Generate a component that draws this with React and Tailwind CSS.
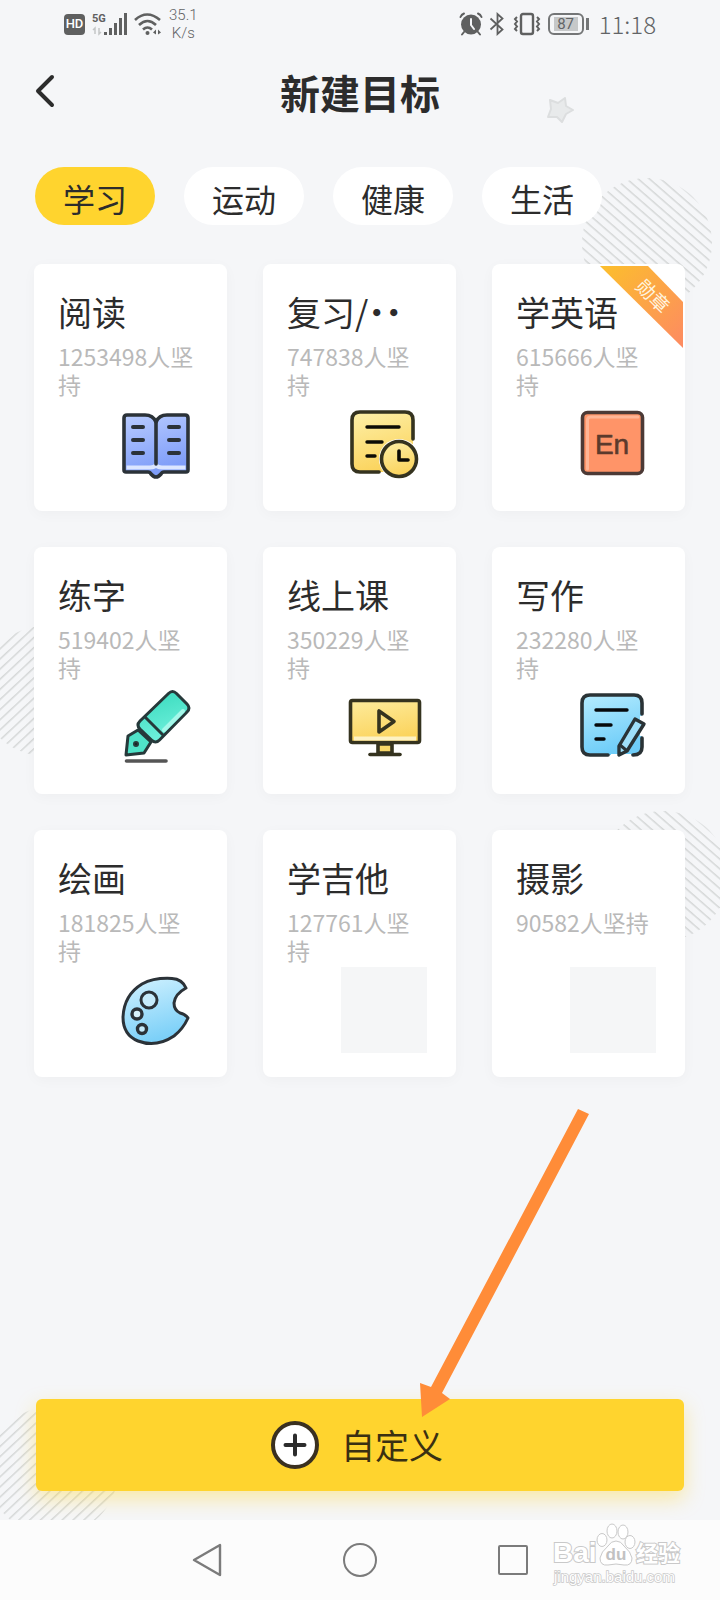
import { useState } from 'react'
import clsx from 'clsx'

const tabs = ['学习', '运动', '健康', '生活']

const goals = [
  { name: '阅读', count: 1253498, icon: BookIcon },
  { name: '复习/··', count: 747838, icon: ReviewIcon },
  { name: '学英语', count: 615666, icon: EnglishIcon, medal: true },
  { name: '练字', count: 519402, icon: PenIcon },
  { name: '线上课', count: 350229, icon: MonitorIcon },
  { name: '写作', count: 232280, icon: WritingIcon },
  { name: '绘画', count: 181825, icon: PaletteIcon },
  { name: '学吉他', count: 127761 },
  { name: '摄影', count: 90582 },
]

function Gradient({ id, from, to }) {
  return (
    <linearGradient id={id} x1="0" y1="0" x2="0.3" y2="1">
      <stop offset="0" stopColor={from} />
      <stop offset="1" stopColor={to} />
    </linearGradient>
  )
}

function IconBox({ children, stroke = '#2b3238' }) {
  return (
    <svg viewBox="0 0 86 86" className="size-[86px]" fill="none" stroke={stroke} strokeWidth="3.6" strokeLinecap="round" strokeLinejoin="round" aria-hidden="true">
      {children}
    </svg>
  )
}

function BookIcon() {
  return (
    <IconBox>
      <Gradient id="book" from="#b9ccff" to="#7d9cf8" />
      <path d="M12 17q0-3 3-3h18q8 0 11 7q3-7 11-7h18q3 0 3 3v52q0 2-2 2H52q-2 0-3 2q-5 6-10 0q-1-2-3-2H14q-2 0-2-2z" fill="url(#book)" />
      <path d="M14.500 66.500H38q5 0 6-3q1 3 6 3h23.500" stroke="#dce6ff" strokeWidth="4" strokeLinecap="butt" />
      <path d="M44 21v42" />
      <path d="M21 26h10M21 39h10M21 52h10M57 26h10M57 39h10M57 52h10" strokeWidth="4" />
    </IconBox>
  )
}

function ReviewIcon() {
  return (
    <IconBox stroke="#35331f">
      <Gradient id="review" from="#fdf0a9" to="#fbd45e" />
      <rect x="11" y="11" width="61" height="60" rx="8" fill="url(#review)" stroke="none" />
      <circle cx="58" cy="58" r="20" fill="#fff" stroke="none" />
      <path d="M72 38V19q0-8-8-8H19q-8 0-8 8v44q0 8 8 8h19" />
      <path d="M26 26h32M26 41h15M26 55h8" stroke="#0c0b05" strokeWidth="3.4" />
      <circle cx="58" cy="58" r="17.500" fill="url(#review)" />
      <path d="M58 50v9h9" stroke="#0c0b05" />
    </IconBox>
  )
}

function EnglishIcon() {
  return (
    <IconBox stroke="#4c3a36">
      <rect x="12.500" y="11.500" width="60" height="61" rx="5" fill="#ff9468" />
      <path d="M17.500 68V19q0-3 3-3H68" stroke="#ffb596" strokeWidth="3" />
      <text x="42" y="53" textAnchor="middle" fill="#5c3a2c" stroke="#5c3a2c" strokeWidth="0.6" fontSize="28" fontFamily="'Liberation Sans', sans-serif">En</text>
    </IconBox>
  )
}

function PenIcon() {
  return (
    <IconBox stroke="#26393a">
      <Gradient id="pen" from="#35d9bb" to="#6ff0dc" />
      <path d="M26 46l-10 6l-2 19l18-2l7-11z" fill="#4fe3c8" strokeWidth="3" />
      <path d="M56.500 9.500q4-4 8 0L75 20q4 4 0 8L47.500 56q-4 4-8 0L28 45q-4-4 0-8z" fill="url(#pen)" strokeWidth="3" />
      <path d="M71 27L52 46" stroke="#a5f8ea" strokeWidth="4" />
      <path d="M33 33l18 18" strokeWidth="3" />
      <circle cx="24" cy="60" r="2" fill="#10201f" strokeWidth="2" />
      <path d="M14.500 77H54" stroke="#555" />
    </IconBox>
  )
}

function MonitorIcon() {
  return (
    <IconBox stroke="#35331f">
      <Gradient id="monitor" from="#fdeb9c" to="#fbd45e" />
      <path d="M37 60h14v9H37z" fill="#f8d768" />
      <rect x="9.500" y="16.500" width="69" height="42" rx="2" fill="url(#monitor)" />
      <path d="M13 54.500h62" stroke="#fdf2c4" strokeWidth="4" strokeLinecap="butt" />
      <path d="M38 27v21l15-10.500z" />
      <path d="M29 70.500h30" />
    </IconBox>
  )
}

function WritingIcon() {
  return (
    <IconBox stroke="#2a3336">
      <Gradient id="writing" from="#b5ecff" to="#6fcdf8" />
      <rect x="12" y="11" width="60" height="60" rx="8" fill="url(#writing)" stroke="none" />
      <path d="M70 32h6v20h-6zM41 70h20v6H41z" fill="#fff" stroke="none" />
      <path d="M72 30V19q0-8-8-8H20q-8 0-8 8v44q0 8 8 8h18" />
      <path d="M72 54v9q0 8-9 8" />
      <path d="M26 26h31M26 41h15M26 55h8" stroke="#06090b" strokeWidth="3.4" />
      <path d="M65 35l9 5l-17 27l-8 4v-9z" fill="#9fdff9" strokeWidth="3.400" />
      <path d="M50 61l6 5" strokeWidth="3" />
    </IconBox>
  )
}

function PaletteIcon() {
  return (
    <IconBox>
      <Gradient id="palette" from="#d3f2ff" to="#7cd0f8" />
      <path d="M74 21q-4-9-14-9.500q-18-1-30 5.500q-18 11-19 33q0 18 15 24q18 7 36-5q9-7 14-18q-3-4-8-5q-6-3-6-10q1-9 12-15z" fill="url(#palette)" strokeWidth="3" />
      <circle cx="37" cy="33" r="8" strokeWidth="3" fill="#c5ebfb" />
      <circle cx="25" cy="47" r="5" strokeWidth="3.400" fill="#d8f2fc" />
      <circle cx="30" cy="62" r="4.500" strokeWidth="3.400" fill="#c5ebfb" />
    </IconBox>
  )
}

function MedalRibbon() {
  return (
    <svg viewBox="0 0 83 83" className="absolute top-0.5 right-0.5 size-[83px]">
      <linearGradient id="ribbon" x1="0" y1="0" x2="1" y2="1">
        <stop offset="0" stopColor="#fcbf2c" />
        <stop offset="1" stopColor="#fd8a62" />
      </linearGradient>
      <path d="M0 0h48l35 36v46z" fill="url(#ribbon)" />
      <text x="53" y="37" textAnchor="middle" transform="rotate(45 53 30)" fill="#fff4df" fontSize="19">勋章</text>
    </svg>
  )
}

// striped circle used as background decoration
function Stripes({ id, className, flip }) {
  return (
    <svg viewBox="0 0 130 130" className={clsx('absolute -z-10 size-[130px]', className)} aria-hidden="true">
      <pattern id={id} width="8" height="7.4" patternUnits="userSpaceOnUse" patternTransform={flip ? 'rotate(-43)' : 'rotate(41)'}>
        <rect width="8" height="1.500" fill="#d6d8d8" />
      </pattern>
      <circle cx="65" cy="65" r="65" fill={`url(#${id})`} />
    </svg>
  )
}

function StatusBar() {
  return (
    <div className="flex h-12 items-center justify-between px-16 text-[#626466]">
      <div className="flex items-center">
        <span className="flex size-[21px] items-center justify-center rounded-sm bg-[#5f6060] font-['Roboto',sans-serif] text-[13px] font-medium text-white">HD</span>
        <svg viewBox="0 0 36 24" className="ml-[7px] h-6 w-9" aria-hidden="true">
          <text x="0" y="10" fontSize="11" fontWeight="700" fill="#5f6060" fontFamily="'Liberation Sans Narrow', Roboto, sans-serif">5G</text>
          <path d="M3 22v-6l-2 2M7 16v6l2-2" stroke="#c4c6c6" strokeWidth="1.500" fill="none" />
          <path d="M13.500 20v3M18.500 16v7M23.500 11v12M28.500 6v17M33.500 1v22" stroke="#5f6060" strokeWidth="3" />
        </svg>
        <svg viewBox="0 0 28 24" className="ml-1.5 h-6 w-7" fill="none" stroke="#5f6060" strokeWidth="2.600" aria-hidden="true">
          <path d="M1 8q12-11 25 0M5 13q8.500-8 17 0M9 17.500q4.500-4 9 0" />
          <circle cx="13.500" cy="21" r="2" fill="#5f6060" stroke="none" />
          <path d="M19 20.500l3-3v5zM27 20.500l-3-3v5z" fill="#5f6060" stroke="none" />
        </svg>
        <span className="ml-[7px] text-center font-['Roboto',sans-serif] text-[15px] leading-[18px] font-light">
          35.1<br />K/s
        </span>
      </div>
      <div className="flex items-center">
        <svg viewBox="0 0 24 24" className="size-6" fill="none" stroke="#5f6060" strokeWidth="2" strokeLinecap="round" aria-hidden="true">
          <circle cx="12" cy="12.500" r="10" fill="#5f6060" stroke="none" />
          <path d="M12 7v6l3 4" stroke="#f5f6f8" />
          <path d="M1.500 5q1-2.500 3.500-3.500M22.500 5q-1-2.500-3.500-3.500M5 20l-2 2.500M19 20l2 2.500" />
        </svg>
        <svg viewBox="0 0 16 24" className="ml-1.5 h-6 w-4" fill="none" stroke="#5f6060" strokeWidth="1.800" aria-hidden="true">
          <path d="M1.500 6.500l12 11l-5 4.500V2l5 4.500l-12 11" />
        </svg>
        <svg viewBox="0 0 28 24" className="ml-2 h-6 w-7" fill="none" stroke="#5f6060" strokeWidth="2" aria-hidden="true">
          <rect x="8" y="2" width="12" height="20" rx="2" strokeWidth="2.400" />
          <path d="M4 5L2 7l2 2.500L2 12l2 2.500L2 17l2 2M24 5l2 2l-2 2.500l2 2.500l-2 2.500l2 2.500l-2 2" />
        </svg>
        <span className="ml-[7px] flex h-[22px] w-9 items-center justify-center rounded-md border-2 border-[#747677] p-0.5">
          <span className="flex h-full w-6 items-center justify-center bg-[#c6c8c9] font-['Roboto',sans-serif] text-[15px]">87</span>
        </span>
        <span className="ml-0.5 h-3 w-[3px] bg-[#747677]" />
        <span className="ml-2.5 font-['Noto_Sans_CJK_SC',sans-serif] text-[24px] leading-none font-light">11:18</span>
      </div>
    </div>
  )
}

function GoalCard({ goal }) {
  const Icon = goal.icon
  return (
    <button type="button" className="relative flex flex-col rounded-lg bg-white pt-6 pr-[29px] pb-6 pl-6 text-left shadow-[0_3px_14px_rgba(0,0,0,0.03)]">
      <span className="text-[34px] leading-[48px] whitespace-nowrap text-[#2c2c2c] [font-feature-settings:'halt']">{goal.name}</span>
      <span className="mt-1.5 min-h-[59px] text-[23px] leading-7 text-[#b9b9b9]">{`${goal.count}人坚持`}</span>
      <span className="self-end">
        {Icon ? <Icon /> : <span className="block size-[86px] bg-[#f5f6f7]" />}
      </span>
      {goal.medal && <MedalRibbon />}
    </button>
  )
}

function Watermark() {
  return (
    <svg viewBox="0 0 132 64" className="absolute right-9 bottom-3.5 h-16 w-[132px]" fill="#fff" stroke="#c9c9c9" strokeWidth="1" fontFamily="'Liberation Sans', 'Noto Sans CJK SC', sans-serif">
      <text x="1" y="40" fontSize="28" fontWeight="700" paintOrder="stroke" strokeWidth="2">Bai</text>
      <ellipse cx="50" cy="18" rx="5" ry="6.500" />
      <ellipse cx="60" cy="9" rx="5" ry="7" />
      <ellipse cx="71" cy="10" rx="5" ry="7" />
      <ellipse cx="78" cy="20" rx="5" ry="6.500" />
      <path d="M64 19q5 0 8 5q7 6 8 12q0 8-8 7q-8-2-16 0q-8 1-8-7q1-6 8-12q3-5 8-5z" />
      <text x="64" y="38" textAnchor="middle" fontSize="17" fontWeight="700" fill="#c2c2c2" stroke="none">du</text>
      <text x="84" y="39" fontSize="22" fontWeight="700" paintOrder="stroke" strokeWidth="2">经验</text>
      <text x="2" y="60" fontSize="15" paintOrder="stroke" strokeWidth="1.500">jingyan.baidu.com</text>
    </svg>
  )
}

export default function App() {
  const [active, setActive] = useState(tabs[0])

  return (
    <div className="relative isolate flex min-h-screen flex-col overflow-hidden bg-[#f5f6f8] font-['Noto_Sans_CJK_SC',sans-serif]">
      <Stripes id="s1" className="top-[178px] right-2" />
      <Stripes id="s2" className="top-[626px] -left-5" flip />
      <Stripes id="s3" className="top-[811px] -right-2" />
      <Stripes id="s4" className="bottom-16 -left-3" flip />

      <StatusBar />

      <header className="relative flex h-[92px] items-center justify-center">
        <button type="button" aria-label="返回" className="absolute left-8 pb-1.5">
          <svg viewBox="0 0 26 36" className="h-9 w-[26px]" fill="none" stroke="#2c2c2c" strokeWidth="4" strokeLinecap="round" strokeLinejoin="round">
            <path d="M20 4L6 18l14 14" />
          </svg>
        </button>
        <h1 className="pb-1 text-[40px] leading-none font-bold text-[#2c2c2c]">新建目标</h1>
        <svg viewBox="0 0 28 28" className="absolute top-[49px] left-1/2 ml-[186px] size-7" fill="#e8eaeb" stroke="#dcdedf" strokeWidth="2" strokeLinejoin="round" aria-hidden="true">
          <path d="M4 3l8 3l7-5l1 8l7 4l-7 4l-4 8l-5-5l-9 0l3-8z" />
        </svg>
      </header>

      <nav className="mt-[27px] flex gap-[29px] px-[35px]">
        {tabs.map(tab => (
          <button
            key={tab}
            type="button"
            onClick={() => setActive(tab)}
            className={clsx(
              'h-[58px] rounded-full px-7 pt-1 text-[32px] leading-none text-[#2c2c2c]',
              tab === active ? 'bg-[#ffd42e]' : 'bg-white',
            )}
          >
            {tab}
          </button>
        ))}
      </nav>

      <main className="mt-[39px] grid grid-cols-3 gap-9 pr-[35px] pl-[34px]">
        {goals.map(goal => <GoalCard key={goal.name} goal={goal} />)}
      </main>

      <div className="relative mx-9 mt-auto mb-[29px]">
        <button type="button" className="flex h-[92px] w-full items-center justify-center gap-[22px] rounded-md bg-[#ffd42e] pr-1.5 text-[34px] text-[#3a3012] shadow-[0_8px_20px_rgba(255,212,46,0.4)]">
          <svg viewBox="0 0 48 48" className="size-12" aria-hidden="true">
            <circle cx="24" cy="24" r="22" fill="#fff" stroke="#3a3020" strokeWidth="4" />
            <path d="M14.500 24h19M24 14.500v19" stroke="#2c2c2c" strokeWidth="4" strokeLinecap="round" />
          </svg>
          <span className="leading-none">自定义</span>
        </button>
        <svg viewBox="0 0 170 308" className="pointer-events-none absolute bottom-[74px] left-1/2 ml-[60px] h-[308px] w-[170px]" fill="#ff8c38" aria-hidden="true">
          <path d="M158 0l11 5L22 284l8 6L2 308L0 274l11 4z" />
        </svg>
      </div>

      <footer className="relative flex h-20 items-center justify-center gap-[120px] bg-[#fcfcfc]">
        <button type="button" aria-label="后退">
          <svg viewBox="0 0 32 36" className="h-9 w-8" fill="none" stroke="#7b7b7b" strokeWidth="2.400" strokeLinejoin="round">
            <path d="M3 18L29 3v30z" />
          </svg>
        </button>
        <button type="button" aria-label="主页" className="size-[34px] rounded-full border-2 border-[#7b7b7b]" />
        <button type="button" aria-label="最近任务" className="size-8 p-px">
          <span className="block size-[30px] rounded-xs border-2 border-[#7b7b7b]" />
        </button>
        <Watermark />
      </footer>
    </div>
  )
}
